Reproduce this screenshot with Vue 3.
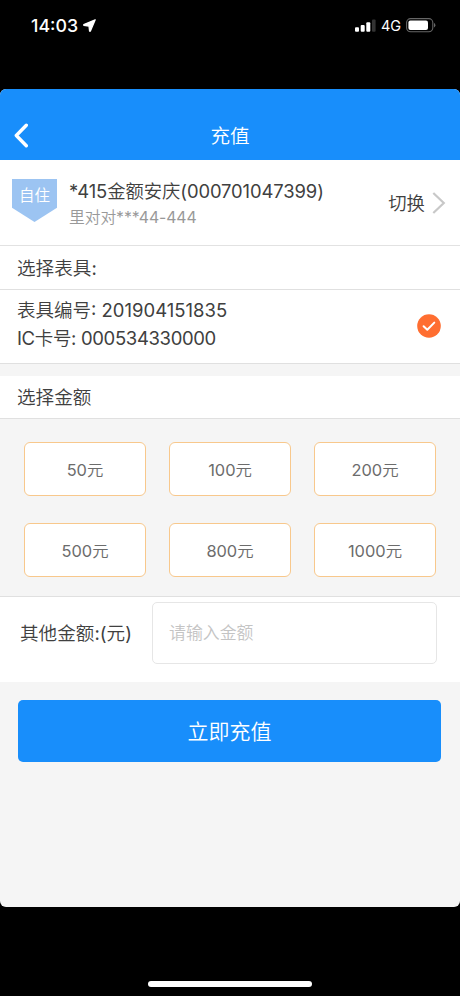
<script setup>
import { ref } from "vue";

// 充值金额选项
const amounts = [50, 100, 200, 500, 800, 1000];
// 其他金额
const customAmount = ref("");
const meter = {
  no: "201904151835",
  card: "000534330000",
};

// 点击金额后填入输入框
const selectAmount = (amount) => {
  customAmount.value = String(amount);
};
</script>

<template>
  <div class="phone">
    <!-- 状态栏 -->
    <div class="status-bar">
      <span class="time">14:03</span>
      <svg class="location" width="13" height="13" viewBox="0 0 13 13">
        <path d="M12.2 0.8 L0.8 5.6 L0.8 6.3 L6 7 L6.6 12.2 L7.3 12.2 Z" fill="#fff" stroke="#fff" stroke-width="1.3" stroke-linejoin="round" />
      </svg>
      <svg class="signal" width="21" height="13" viewBox="0 0 21 13">
        <rect x="0" y="8.2" width="4" height="4.6" rx="1" fill="#fff" />
        <rect x="5.7" y="6" width="4" height="6.8" rx="1" fill="#fff" />
        <rect x="11.3" y="3.2" width="4" height="9.6" rx="1" fill="#fff" />
        <rect x="17" y="0.4" width="3.6" height="12.4" rx="1" fill="#333" />
      </svg>
      <span class="network">4G</span>
      <svg class="battery" width="30" height="15" viewBox="0 0 30 15">
        <rect x="0.6" y="0.6" width="26.2" height="13.2" rx="4" fill="none" stroke="#666" stroke-width="1.1" />
        <rect x="2.4" y="2.4" width="19.6" height="9.6" rx="2" fill="#fff" />
        <path d="M28 5 Q29.4 5.6 29.4 7.2 Q29.4 8.8 28 9.4 Z" fill="#666" />
      </svg>
    </div>

    <div class="screen">
      <div class="header">
        <svg class="back" width="15" height="25" viewBox="0 0 15 25">
          <path d="M12.3 2.3 L2.3 12.5 L12.3 22.7" fill="none" stroke="#fff" stroke-width="3.4" stroke-linecap="round" stroke-linejoin="round" />
        </svg>
        <h1>充值</h1>
      </div>

      <!-- 户号信息 -->
      <div class="account">
        <div class="tag"><span>自住</span></div>
        <div class="account-info">
          <p class="name"><span class="num">*415</span>金额安庆<span class="num">(000701047399)</span></p>
          <p class="address">里对对<span class="num">***44-444</span></p>
        </div>
        <span class="switch">切换</span>
        <svg class="arrow" width="14" height="22" viewBox="0 0 14 22">
          <path d="M1.3 1 L11.8 11 L1.3 21" fill="none" stroke="#c8c8c8" stroke-width="2.2" />
        </svg>
      </div>

      <div class="section-title meter-title">选择表具<span class="num">:</span></div>
      <div class="meter">
        <div class="meter-info">
          <p class="meter-no">表具编号<span class="num">: {{ meter.no }}</span></p>
          <p class="meter-card"><span class="num">IC</span>卡号<span class="num">: {{ meter.card }}</span></p>
        </div>
        <svg class="checked" width="24" height="24" viewBox="0 0 24 24">
          <circle cx="12" cy="12" r="11.8" fill="#ff6e31" />
          <path d="M6.6 12.2 L10.3 15.7 L17.3 8.6" fill="none" stroke="#fff" stroke-width="2" stroke-linecap="round" stroke-linejoin="round" />
        </svg>
      </div>

      <div class="section-title amount-title">选择金额</div>
      <div class="amounts">
        <button v-for="amount in amounts" :key="amount" @click="selectAmount(amount)"><span class="num">{{ amount }}</span>元</button>
      </div>

      <div class="other">
        <label for="amount">其他金额<span class="num">:(</span>元<span class="num">)</span></label>
        <input id="amount" v-model="customAmount" placeholder="请输入金额" />
      </div>

      <button class="submit">立即充值</button>
    </div>

    <div class="home-bar"></div>
  </div>
</template>

<style>
body {
  margin: 0;
  background: #000;
}
</style>

<style scoped>
.phone {
  display: flex;
  flex-direction: column;
  width: 460px;
  height: 996px;
  background: #000;
  color: #404040;
  font-family: Inter, "Noto Sans CJK SC", sans-serif;
  font-weight: 350;
  overflow: hidden;
}
.phone * {
  box-sizing: border-box;
}
p,
h1 {
  margin: 0;
  font-weight: inherit;
}
button,
input {
  font-family: inherit;
  font-weight: inherit;
}
/* 数字和符号比汉字稍粗 */
.num {
  font-weight: 400;
}
/* 状态栏 */
.status-bar {
  display: flex;
  align-items: center;
  height: 89px;
  padding: 0 24px 37px 31px;
  color: #fff;
}
.time {
  width: 49px;
  margin-top: -2px;
  font-size: 17.8px;
  font-weight: 500;
  white-space: nowrap;
}
.location {
  margin: -1px 0 0 3px;
}
.signal {
  margin-top: -1px;
  margin-left: auto;
}
.network {
  width: 20px;
  margin: -1px 5px 0;
  font-size: 14.5px;
  font-weight: 400;
}
.battery {
  margin-top: -1px;
}
/* 页面 */
.screen {
  height: 818px;
  border-radius: 6px;
  background: #f5f5f5;
  overflow: hidden;
}
.header {
  display: flex;
  align-items: center;
  height: 71px;
  padding: 22px 14px 0;
  background: #188efb;
  color: #fff;
}
.header h1 {
  flex: 1;
  margin-right: 15px;
  font-size: 19.6px;
  line-height: 28px;
  text-align: center;
}
.account {
  display: flex;
  height: 86px;
  padding: 0 14px 0 12px;
  border-bottom: 1px solid #e2e2e2;
  background: #fff;
}
.tag {
  width: 45px;
  height: 43px;
  margin-top: 19px;
  background: #9cc4f2;
  clip-path: polygon(0 0, 100% 0, 100% 67%, 50% 100%, 0 67%);
  color: #fff;
  font-size: 15.5px;
  line-height: 34px;
  text-align: center;
}
.account-info {
  flex: 1;
  margin-left: 12px;
  padding-top: 18px;
  white-space: nowrap;
}
.name {
  font-size: 18.4px;
  line-height: 27px;
  letter-spacing: -0.1px;
}
.address {
  color: #999;
  font-size: 15.8px;
  line-height: 26px;
  letter-spacing: -0.1px;
}
.switch {
  margin-right: 7px;
  font-size: 18.4px;
  line-height: 86px;
}
.arrow {
  margin-top: 32px;
}
.section-title {
  padding-left: 17px;
  border-bottom: 1px solid #e0e0e0;
  background: #fff;
  font-size: 18.6px;
}
.meter-title {
  height: 44px;
  line-height: 44px;
}
.amount-title {
  height: 43px;
  margin-top: 12px;
  line-height: 43px;
}
.meter {
  display: flex;
  align-items: center;
  justify-content: space-between;
  height: 74px;
  padding: 0 19px 0 17px;
  border-bottom: 1px solid #e0e0e0;
  background: #fff;
  font-size: 18.5px;
  line-height: 28px;
}
.meter-info {
  padding-bottom: 5px;
}
.meter-card {
  letter-spacing: -0.35px;
}
.checked {
  margin-bottom: 1px;
}
.amounts {
  display: grid;
  grid-template-columns: repeat(3, 122px);
  grid-auto-rows: 54px;
  gap: 27px 23px;
  height: 178px;
  padding: 23px 24px 0;
  border-bottom: 1px solid #e0e0e0;
}
.amounts button {
  padding: 0 0 1px;
  border: 1px solid #f8c88c;
  border-radius: 6px;
  background: #fff;
  color: #6c6c6c;
  font-size: 16.4px;
}
.other {
  display: flex;
  align-items: flex-start;
  height: 85px;
  padding: 5px 23px 0 20px;
  background: #fff;
}
.other label {
  width: 132px;
  font-size: 18.6px;
  line-height: 62px;
  white-space: nowrap;
}
.other input {
  width: 285px;
  height: 62px;
  padding: 0 16px;
  border: 1px solid #e6e6e6;
  border-radius: 5px;
  background: #fff;
  color: #444;
  font-size: 16.9px;
  outline: none;
}
.other input::placeholder {
  color: #c4c4c4;
}
.submit {
  display: block;
  width: 423px;
  height: 62px;
  margin: 18px 0 0 18px;
  padding: 0 0 2px;
  border: none;
  border-radius: 5px;
  background: #188efb;
  color: #fff;
  font-size: 21px;
}
.home-bar {
  width: 164px;
  height: 6px;
  margin: 74px auto 0;
  border-radius: 3px;
  background: #fff;
}
</style>
